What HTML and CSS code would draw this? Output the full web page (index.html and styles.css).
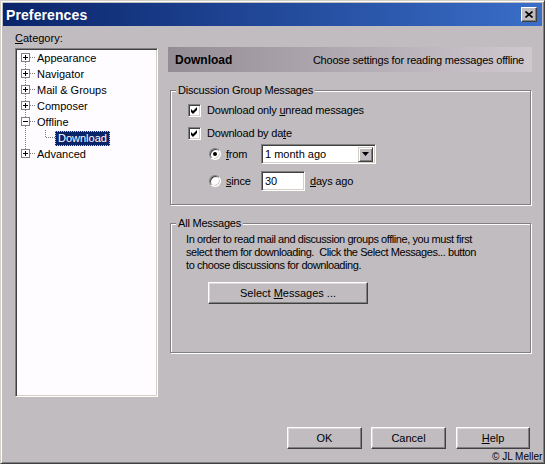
FILE: index.html
```html
<!DOCTYPE html>
<html>
<head>
<meta charset="utf-8">
<link rel="stylesheet" href="styles.css">
</head>
<body>
<div class="window">
  <div class="titlebar">
    <span class="title">Preferences</span>
    <span class="close"><svg width="8" height="7" viewBox="0 0 8 7"><path d="M0.5 0.5 L7.5 6.5 M7.5 0.5 L0.5 6.5" stroke="#000" stroke-width="1.6"/></svg></span>
  </div>
  <div class="main">
    <div class="left">
      <div class="cat-label"><u>C</u>ategory:</div>
      <div class="tree">
        <div class="node">
          <svg width="20" height="16" viewBox="0 0 20 16" shape-rendering="crispEdges"><path d="M8.5 12 V16 M13 7.5 H19" stroke="#808080" stroke-dasharray="1 1"/><rect x="4.5" y="3.5" width="8" height="8" fill="#fff" stroke="#808080"/><path d="M6 7.5 H11 M8.5 5 V10" stroke="#000"/></svg>
          <span class="label">Appearance</span>
        </div>
        <div class="node">
          <svg width="20" height="16" viewBox="0 0 20 16" shape-rendering="crispEdges"><path d="M8.5 0 V3 M8.5 12 V16 M13 7.5 H19" stroke="#808080" stroke-dasharray="1 1"/><rect x="4.5" y="3.5" width="8" height="8" fill="#fff" stroke="#808080"/><path d="M6 7.5 H11 M8.5 5 V10" stroke="#000"/></svg>
          <span class="label">Navigator</span>
        </div>
        <div class="node">
          <svg width="20" height="16" viewBox="0 0 20 16" shape-rendering="crispEdges"><path d="M8.5 0 V3 M8.5 12 V16 M13 7.5 H19" stroke="#808080" stroke-dasharray="1 1"/><rect x="4.5" y="3.5" width="8" height="8" fill="#fff" stroke="#808080"/><path d="M6 7.5 H11 M8.5 5 V10" stroke="#000"/></svg>
          <span class="label">Mail &amp; Groups</span>
        </div>
        <div class="node">
          <svg width="20" height="16" viewBox="0 0 20 16" shape-rendering="crispEdges"><path d="M8.5 0 V3 M8.5 12 V16 M13 7.5 H19" stroke="#808080" stroke-dasharray="1 1"/><rect x="4.5" y="3.5" width="8" height="8" fill="#fff" stroke="#808080"/><path d="M6 7.5 H11 M8.5 5 V10" stroke="#000"/></svg>
          <span class="label">Composer</span>
        </div>
        <div class="node">
          <svg width="20" height="16" viewBox="0 0 20 16" shape-rendering="crispEdges"><path d="M8.5 0 V3 M8.5 12 V16 M13 7.5 H19" stroke="#808080" stroke-dasharray="1 1"/><rect x="4.5" y="3.5" width="8" height="8" fill="#fff" stroke="#808080"/><path d="M6 7.5 H11" stroke="#000"/></svg>
          <span class="label">Offline</span>
        </div>
        <div class="node">
          <svg width="38" height="16" viewBox="0 0 38 16" shape-rendering="crispEdges"><path d="M8.5 0 V16 M28.5 0 V8 M29 7.5 H38" stroke="#808080" stroke-dasharray="1 1"/></svg>
          <span class="label selected">Download</span>
        </div>
        <div class="node">
          <svg width="20" height="16" viewBox="0 0 20 16" shape-rendering="crispEdges"><path d="M8.5 0 V3 M13 7.5 H19" stroke="#808080" stroke-dasharray="1 1"/><rect x="4.5" y="3.5" width="8" height="8" fill="#fff" stroke="#808080"/><path d="M6 7.5 H11 M8.5 5 V10" stroke="#000"/></svg>
          <span class="label">Advanced</span>
        </div>
      </div>
    </div>
    <div class="right">
      <div class="header">
        <span class="header-title">Download</span>
        <span class="header-desc">Choose settings for reading messages offline</span>
      </div>
      <div class="group group-dgm">
        <div class="group-title">Discussion Group Messages</div>
        <div class="row row-check row-first">
          <span class="checkbox"><svg width="7" height="7" viewBox="0 0 7 7"><path d="M0 2 L2 4 L6 0 L6 3 L2 7 L0 5 Z" fill="#000"/></svg></span>
          <span>Download only <u>u</u>nread messages</span>
        </div>
        <div class="row row-check row-second">
          <span class="checkbox"><svg width="7" height="7" viewBox="0 0 7 7"><path d="M0 2 L2 4 L6 0 L6 3 L2 7 L0 5 Z" fill="#000"/></svg></span>
          <span>Download by da<u>t</u>e</span>
        </div>
        <div class="row row-radio row-from">
          <span class="radio"><span class="dot"></span></span>
          <span class="radio-label"><u>f</u>rom</span>
          <span class="select">
            <span class="select-text">1 month ago</span>
            <span class="select-arrow"><svg width="7" height="4" viewBox="0 0 7 4"><path d="M0 0 H7 L3.5 4 Z" fill="#000"/></svg></span>
          </span>
        </div>
        <div class="row row-radio row-since">
          <span class="radio"></span>
          <span class="radio-label"><u>s</u>ince</span>
          <span class="textbox">30</span>
          <span class="days"><u>d</u>ays ago</span>
        </div>
      </div>
      <div class="group group-all">
        <div class="group-title">All Messages</div>
        <p class="info">In order to read mail and discussion groups offline, you must first<br>select them for downloading.&nbsp; Click the Select Messages... button<br>to choose discussions for downloading.</p>
        <div class="button select-btn"><span>Select <u>M</u>essages ...</span></div>
      </div>
    </div>
  </div>
  <div class="footer">
    <div class="buttons">
      <div class="button btn-ok"><span>OK</span></div>
      <div class="button btn-cancel"><span>Cancel</span></div>
      <div class="button btn-help"><span><u>H</u>elp</span></div>
    </div>
    <div class="copyright">© JL Meller</div>
  </div>
</div>
</body>
</html>
```
FILE: styles.css
```css
* { box-sizing: border-box; }
html, body { margin: 0; padding: 0; overflow: hidden; }
body {
  width: 545px;
  height: 464px;
  font-family: "Liberation Sans", Arial, sans-serif;
  font-size: 11px;
  color: #000;
  background: #c0bcc0;
}
u { text-decoration: underline; text-underline-offset: 1px; }

.window {
  width: 545px;
  height: 464px;
  border: 1px solid;
  border-color: #d4d0c8 #404040 #404040 #d4d0c8;
  box-shadow: inset 1px 1px #fff, inset -1px -1px #808080;
  padding: 2px;
  background: #c0bcc0;
  display: flex;
  flex-direction: column;
}

.titlebar {
  flex: none;
  height: 23px;
  display: flex;
  align-items: center;
  justify-content: space-between;
  padding: 0 5px 0 3px;
  background: linear-gradient(to right, #0a246a, #3a6ec8);
}
.title {
  color: #fff;
  font-weight: bold;
  font-size: 14px;
  letter-spacing: 0.1px;
}
.close {
  width: 16px;
  height: 15px;
  background: #c0bcc0;
  border: 1px solid;
  border-color: #fff #404040 #404040 #fff;
  box-shadow: inset -1px -1px #808080;
  display: flex;
  align-items: center;
  justify-content: center;
}
.close svg { display: block; }

.main {
  flex: none;
  display: flex;
  padding: 6px 0 0 12px;
}
.left { width: 143px; flex: none; }
.cat-label {
  height: 13px;
  line-height: 13px;
  margin-bottom: 3px;
}
.tree {
  height: 349px;
  background: #fffcff;
  border: 1px solid;
  border-color: #808080 #fff #fff #808080;
  box-shadow: inset 1px 1px #404040, inset -1px -1px #d4d0c8;
  padding: 1px;
}
.node {
  display: flex;
  align-items: center;
  height: 16px;
}
.node svg { display: block; flex: none; }
.label { line-height: 14px; white-space: nowrap; }
.label.selected {
  height: 15px;
  line-height: 13px;
  padding: 0 2px;
  background: #0a246a;
  color: #fff;
  border: 1px dotted #d8d090;
}

.right { width: 364px; margin-left: 10px; flex: none; }
.header {
  margin-top: 15px;
  height: 25px;
  display: flex;
  align-items: center;
  justify-content: space-between;
  padding: 0 8px 0 7px;
  background: linear-gradient(to right, #958d95, #cfc8cf);
}
.header-title { font-weight: bold; font-size: 12px; }
.header-desc { letter-spacing: -0.2px; }

.group {
  margin: 18px 1px 0 2px;
  border: 1px solid #808080;
  box-shadow: inset 1px 1px #fff, 1px 1px #fff;
}
.group-dgm { padding-bottom: 13px; }
.group-all { padding-bottom: 48px; }
.group-title {
  width: max-content;
  margin: -7px 0 0 5px;
  padding: 0 2px;
  line-height: 13px;
  background: #c0bcc0;
  letter-spacing: -0.2px;
}

.row { display: flex; align-items: center; letter-spacing: -0.2px; }
.row-check { height: 16px; padding-left: 17px; }
.row-first { margin-top: 5px; }
.row-second { margin-top: 7px; }
.row-radio { height: 20px; padding-left: 38px; }
.row-from { margin-top: 3px; }
.row-since { margin-top: 7px; }

.checkbox {
  width: 13px;
  height: 13px;
  flex: none;
  margin-right: 6px;
  background: #fff;
  border: 1px solid;
  border-color: #808080 #fff #fff #808080;
  box-shadow: inset 1px 1px #404040, inset -1px -1px #d4d0c8;
  display: flex;
  align-items: center;
  justify-content: center;
}
.checkbox svg { display: block; }

.radio {
  width: 12px;
  height: 12px;
  flex: none;
  border-radius: 50%;
  background: #fff;
  border: 1px solid;
  border-color: #808080 #fff #fff #808080;
  box-shadow: inset 1px 1px #404040, inset -1px -1px #d4d0c8;
  display: flex;
  align-items: center;
  justify-content: center;
}
.dot {
  width: 4px;
  height: 4px;
  border-radius: 50%;
  background: #000;
}
.radio-label { width: 35px; margin-left: 5px; flex: none; }

.select {
  width: 115px;
  height: 20px;
  display: flex;
  align-items: center;
  justify-content: space-between;
  background: #fff;
  border: 1px solid;
  border-color: #808080 #fff #fff #808080;
  box-shadow: inset 1px 1px #404040, inset -1px -1px #d4d0c8;
  padding: 1px 2px 1px 3px;
  letter-spacing: 0;
}
.select-arrow {
  width: 15px;
  height: 15px;
  background: #c0bcc0;
  border: 1px solid;
  border-color: #d4d0c8 #404040 #404040 #d4d0c8;
  box-shadow: inset 1px 1px #fff, inset -1px -1px #808080;
  display: flex;
  align-items: center;
  justify-content: center;
}
.select-arrow svg { display: block; }

.textbox {
  width: 44px;
  height: 20px;
  line-height: 18px;
  background: #fff;
  border: 1px solid;
  border-color: #808080 #fff #fff #808080;
  box-shadow: inset 1px 1px #404040, inset -1px -1px #d4d0c8;
  padding-left: 3px;
  letter-spacing: 0;
}
.days { margin-left: 5px; }

.info {
  margin: 3px 0 0 0;
  padding-left: 15px;
  line-height: 13px;
  letter-spacing: -0.43px;
  white-space: nowrap;
}

.button {
  height: 22px;
  display: flex;
  align-items: center;
  justify-content: center;
  background: #c0bcc0;
  border: 1px solid;
  border-color: #fff #404040 #404040 #fff;
  box-shadow: inset -1px -1px #808080, inset 1px 1px #dcd8dc;
  white-space: nowrap;
}
.select-btn {
  width: 160px;
  margin: 10px 0 0 37px;
}

.footer { flex: none; margin-top: 30px; }
.buttons {
  display: flex;
  justify-content: flex-end;
  padding-right: 12px;
}
.btn-ok { width: 75px; }
.btn-cancel { width: 75px; margin-left: 9px; }
.btn-help { width: 74px; margin-left: 10px; }
.copyright {
  margin: 2px 0 0 489px;
  font-size: 10px;
  line-height: 12px;
  white-space: nowrap;
}
```
